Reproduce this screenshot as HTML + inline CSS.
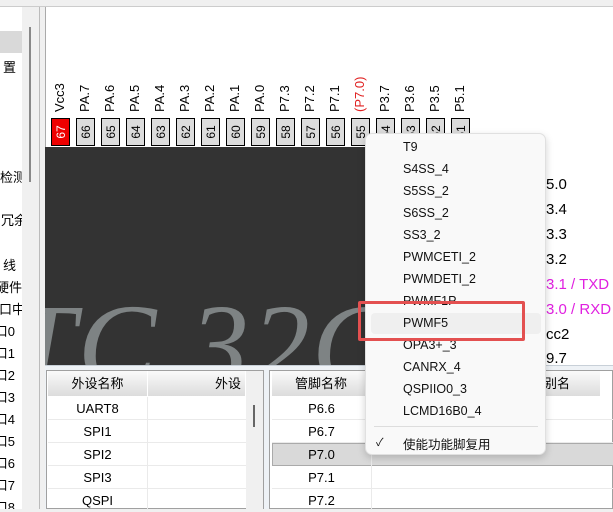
<!DOCTYPE html>
<html><head><meta charset="utf-8"><style>
*{margin:0;padding:0;box-sizing:border-box}
body{width:613px;height:509px;overflow:hidden;background:#f0f0f0;font-family:"Liberation Sans","Noto Sans CJK SC",sans-serif;position:relative}
.abs{position:absolute}
.side{left:0;top:7px;width:22px;height:502px;background:#fff;font-size:13px;color:#000;overflow:hidden}
.side div{position:absolute;right:0;white-space:nowrap}
.pin{position:absolute;top:118px;width:19px;height:28px;border:1px solid #000;background:#dcdcdc;font-size:12px;color:#000}
.pin span{position:absolute;left:50%;top:50%;transform:translate(-50%,-50%) rotate(-90deg);white-space:nowrap}
.lbl{position:absolute;width:19px;height:50px;top:62px;font-size:13px}
.lbl span{position:absolute;bottom:0;white-space:nowrap;transform-origin:left bottom;transform:rotate(-90deg) translateY(14px);left:2px}
.rl{position:absolute;left:536px;font-size:15px;color:#000}
.tbl{background:#fff;border:1px solid #a0a0a0}
.hd{position:absolute;top:0;height:25px;background:linear-gradient(#fafafa,#dcdcdc);font-size:13px;line-height:25px;text-align:center;border-right:1px solid #fff}
.row{position:absolute;height:23px;border-bottom:1px solid #eaeaea}
.c{position:absolute;width:99px;text-align:center;font-size:13px;line-height:23px}
.menu{left:365px;top:133px;width:181px;height:322px;background:#f9f9f9;border:1px solid #e0e0e0;border-radius:7px;box-shadow:0 3px 8px rgba(0,0,0,.18)}
.mi{position:absolute;left:37px;font-size:12.5px;color:#111}
</style></head><body>
<div class="abs" style="left:0;top:0;width:613px;height:7px;background:#f0f0f0;border-bottom:1px solid #ccc"></div>
<div class="abs side">
<div style="top:24px;left:0;width:22px;height:22px;background:#d9d9d9"></div>
<div style="top:50px;right:6px">置</div>
<div style="top:160px;right:-4px">检测</div>
<div style="top:203px;right:-5px">冗余</div>
<div style="top:248px;right:6px">线</div>
<div style="top:270px;right:0">硬件</div>
<div style="top:292px;right:-3px">口中</div>
<div style="top:314px;right:7px">口0</div>
<div style="top:336px;right:7px">口1</div>
<div style="top:358px;right:7px">口2</div>
<div style="top:380px;right:7px">口3</div>
<div style="top:402px;right:7px">口4</div>
<div style="top:424px;right:7px">口5</div>
<div style="top:446px;right:7px">口6</div>
<div style="top:468px;right:7px">口7</div>
<div style="top:490px;right:7px">口8</div>
</div>
<div class="abs" style="left:22px;top:7px;width:17px;height:502px;background:#f0f0f0"></div>
<div class="abs" style="left:29px;top:27px;width:2px;height:155px;background:#888"></div>
<div class="abs" style="left:39px;top:7px;width:1px;height:502px;background:#bbb"></div>
<div class="abs" style="left:45px;top:7px;width:568px;height:140px;background:#fff;border-left:1px solid #aaa"></div>
<div class="abs" style="left:45px;top:147px;width:450px;height:218px;background:#333;overflow:hidden">
<div style="position:absolute;left:-96px;top:140px;font-family:'Liberation Serif',serif;font-style:italic;font-size:118px;color:#7e8384;line-height:118px;letter-spacing:2px;white-space:nowrap">STC 32G</div>
</div>
<div class="abs" style="left:495px;top:147px;width:118px;height:218px;background:#fff"></div>
<div id="pins"></div>
<div class="rl" style="top:176px">P5.0</div>
<div class="rl" style="top:201px">P3.4</div>
<div class="rl" style="top:226px">P3.3</div>
<div class="rl" style="top:251px">P3.2</div>
<div class="rl" style="top:276px;color:#e020e0">P3.1 / TXD</div>
<div class="rl" style="top:301px;color:#e020e0">P3.0 / RXD</div>
<div class="rl" style="top:326px">Vcc2</div>
<div class="rl" style="top:350px;height:15px;overflow:hidden">P9.7</div>
<div class="abs" style="left:45px;top:365px;width:568px;height:144px;background:#eef2f6;border-top:1px solid #c8d0d8"></div>
<div class="abs tbl" style="left:46px;top:370px;width:218px;height:139px">
<div class="hd" style="left:1px;width:100px">外设名称</div>
<div class="hd" style="left:101px;width:98px;text-align:right;padding-right:4px">外设</div>
<div class="abs" style="left:199px;top:0;width:17px;height:139px;background:#f0f0f0"></div>
<div class="abs" style="left:206px;top:34px;width:2px;height:22px;background:#666"></div>
<div class="row" style="left:1px;top:26px;width:198px"></div><div class="c" style="left:1px;top:26px">UART8</div>
<div class="row" style="left:1px;top:49px;width:198px"></div><div class="c" style="left:1px;top:49px">SPI1</div>
<div class="row" style="left:1px;top:72px;width:198px"></div><div class="c" style="left:1px;top:72px">SPI2</div>
<div class="row" style="left:1px;top:95px;width:198px"></div><div class="c" style="left:1px;top:95px">SPI3</div>
<div class="c" style="left:1px;top:118px">QSPI</div>
<div class="abs" style="left:100px;top:26px;width:1px;height:113px;background:#eaeaea"></div>
</div>
<div class="abs tbl" style="left:269px;top:370px;width:344px;height:139px">
<div class="hd" style="left:2px;width:99px">管脚名称</div>
<div class="hd" style="left:101px;width:230px;text-align:right;padding-right:30px">管脚别名</div>
<div class="row" style="left:2px;top:26px;width:342px"></div><div class="c" style="left:2px;top:26px">P6.6</div>
<div class="row" style="left:2px;top:49px;width:342px"></div><div class="c" style="left:2px;top:49px">P6.7</div>
<div class="row" style="left:2px;top:72px;width:342px;background:#d9d9d9;border:1px solid #aaa"></div><div class="c" style="left:2px;top:72px">P7.0</div>
<div class="row" style="left:2px;top:95px;width:342px"></div><div class="c" style="left:2px;top:95px">P7.1</div>
<div class="c" style="left:2px;top:118px">P7.2</div>
<div class="abs" style="left:101px;top:26px;width:1px;height:113px;background:#eaeaea"></div>
</div>
<div class="abs menu">
<div class="mi" style="top:6px">T9</div>
<div class="mi" style="top:28px">S4SS_4</div>
<div class="mi" style="top:50px">S5SS_2</div>
<div class="mi" style="top:72px">S6SS_2</div>
<div class="mi" style="top:94px">SS3_2</div>
<div class="mi" style="top:116px">PWMCETI_2</div>
<div class="mi" style="top:138px">PWMDETI_2</div>
<div class="mi" style="top:160px">PWMF1P</div>
<div class="abs" style="left:5px;top:179px;width:170px;height:21px;background:#efefef;border-radius:4px"></div>
<div class="mi" style="top:182px">PWMF5</div>
<div class="mi" style="top:204px">OPA3+_3</div>
<div class="mi" style="top:226px">CANRX_4</div>
<div class="mi" style="top:248px">QSPIIO0_3</div>
<div class="mi" style="top:270px">LCMD16B0_4</div>
<div class="abs" style="left:8px;top:292px;width:164px;height:1px;background:#ddd"></div>
<div class="mi" style="left:10px;top:300px;font-size:11px">✓</div>
<div class="mi" style="top:300px">使能功能脚复用</div>
</div>
<div class="abs" style="left:358px;top:301px;width:167px;height:40px;border:3px solid #e35050;border-radius:2px"></div>
<script>
var L=["Vcc3","PA.7","PA.6","PA.5","PA.4","PA.3","PA.2","PA.1","PA.0","P7.3","P7.2","P7.1","(P7.0)","P3.7","P3.6","P3.5","P5.1"],h="";
for(var i=0;i<17;i++){var x=51+25*i;
h+='<div class="pin" style="left:'+x+'px;'+(i==0?'background:#e00;color:#fff':'')+'"><span>'+(67-i)+'</span></div>';
h+='<div class="lbl" style="left:'+x+'px;'+(i==12?'color:#e02020':'')+'"><span>'+L[i]+'</span></div>';}
document.getElementById('pins').innerHTML=h;
</script>
</body></html>
